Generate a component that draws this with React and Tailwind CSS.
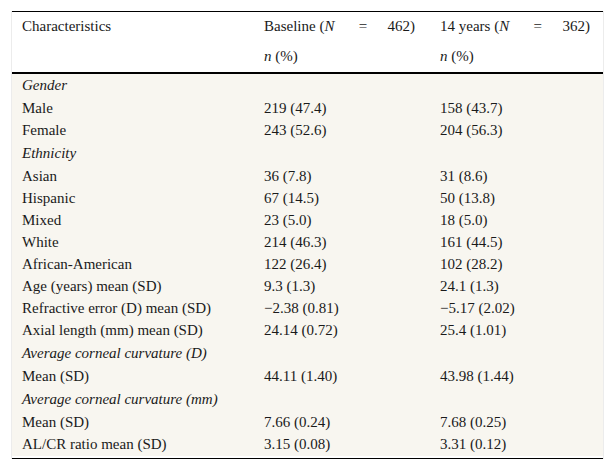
import React from 'react';

const rows = [
    { label: 'Gender', group: true },
    { label: 'Male', a: '219 (47.4)', b: '158 (43.7)' },
    { label: 'Female', a: '243 (52.6)', b: '204 (56.3)' },
    { label: 'Ethnicity', group: true },
    { label: 'Asian', a: '36 (7.8)', b: '31 (8.6)' },
    { label: 'Hispanic', a: '67 (14.5)', b: '50 (13.8)' },
    { label: 'Mixed', a: '23 (5.0)', b: '18 (5.0)' },
    { label: 'White', a: '214 (46.3)', b: '161 (44.5)' },
    { label: 'African-American', a: '122 (26.4)', b: '102 (28.2)' },
    { label: 'Age (years) mean (SD)', a: '9.3 (1.3)', b: '24.1 (1.3)' },
    { label: 'Refractive error (D) mean (SD)', a: '\u22122.38 (0.81)', b: '\u22125.17 (2.02)' },
    { label: 'Axial length (mm) mean (SD)', a: '24.14 (0.72)', b: '25.4 (1.01)' },
    { label: 'Average corneal curvature (D)', group: true },
    { label: 'Mean (SD)', a: '44.11 (1.40)', b: '43.98 (1.44)' },
    { label: 'Average corneal curvature (mm)', group: true },
    { label: 'Mean (SD)', a: '7.66 (0.24)', b: '7.68 (0.25)' },
    { label: 'AL/CR ratio mean (SD)', a: '3.15 (0.08)', b: '3.31 (0.12)' },
];

const HeadCount = ({ title, n }) => (
    <div className="flex justify-between">
        <span>{title} (<i>N</i></span>
        <span className="pl-[4px]">=</span>
        <span>{n})</span>
    </div>
);

export default function App() {
    return (
        <div className="w-[615px] h-[471px] bg-white text-[#1a1a1a] text-[15px] leading-none" style={{ fontFamily: '"Liberation Serif", "Times New Roman", serif' }}>
            <div className="ml-[11px] mt-[11px] w-[593px] border-x border-[#ececec]">
                {/* Header */}
                <div className="border-t border-black border-b-2">
                    <div className="grid grid-cols-[242px_176px_175px] h-[30px] items-center pb-[1px]">
                        <div className="pl-[10px]">Characteristics</div>
                        <div className="pl-[10px] pr-[15px]"><HeadCount title="Baseline" n="462" /></div>
                        <div className="pl-[10px] pr-[15px]"><HeadCount title="14 years" n="362" /></div>
                    </div>
                    <div className="grid grid-cols-[242px_176px_175px] h-[30px] items-center pb-[1px]">
                        <div />
                        <div className="pl-[10px]"><i>n</i> (%)</div>
                        <div className="pl-[10px]"><i>n</i> (%)</div>
                    </div>
                </div>

                {/* Body */}
                <div className="bg-[#f8f6f0]">
                    {rows.map((r, i) =>
                        r.group ? (
                            <div key={i} className="h-[24px] flex items-center pl-[10px] pb-[2px] italic">
                                {r.label}
                            </div>
                        ) : (
                            <div key={i} className="grid grid-cols-[242px_176px_175px] h-[22px] items-center pb-[2px]">
                                <div className="pl-[10px]">{r.label}</div>
                                <div className="pl-[10px]">{r.a}</div>
                                <div className="pl-[10px]">{r.b}</div>
                            </div>
                        )
                    )}
                </div>
                <div className="h-[2px] bg-white" />
                <div className="border-t border-black" />
            </div>
        </div>
    );
}
